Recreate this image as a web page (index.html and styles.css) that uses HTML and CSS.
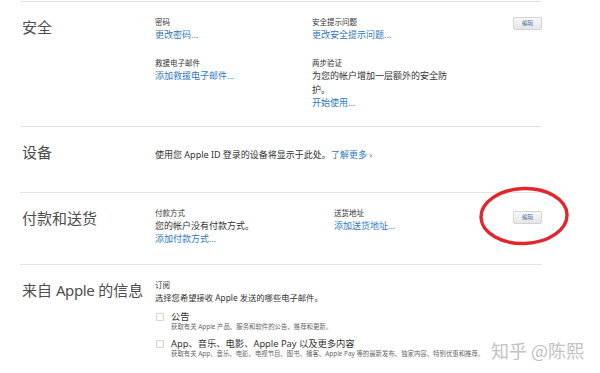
FILE: index.html
```html
<!DOCTYPE html>
<html lang="zh-CN">
<head>
    <meta charset="UTF-8">
    <title>Apple ID 帐户</title>
    <link rel="stylesheet" href="styles.css">
</head>
<body>
    <div class="page">
        <!-- 安全 -->
        <section class="section">
            <h2 class="section-title">安全</h2>
            <div class="fields fields-security">
                <div class="field">
                    <div class="label">密码</div>
                    <a class="link" href="#">更改密码...</a>
                </div>
                <div class="field">
                    <div class="label">安全提示问题</div>
                    <a class="link" href="#">更改安全提示问题...</a>
                </div>
                <button class="edit-button">编辑</button>
                <div class="field">
                    <div class="label">救援电子邮件</div>
                    <a class="link" href="#">添加救援电子邮件...</a>
                </div>
                <div class="field">
                    <div class="label">两步验证</div>
                    <div class="text">为您的帐户增加一层额外的安全防护。</div>
                    <a class="link" href="#">开始使用...</a>
                </div>
            </div>
        </section>

        <!-- 设备 -->
        <section class="section section-devices">
            <h2 class="section-title">设备</h2>
            <div class="text devices-text">
                使用您 Apple ID 登录的设备将显示于此处。<a class="link inline-link" href="#">了解更多 ›</a>
            </div>
        </section>

        <!-- 付款和送货 -->
        <section class="section section-payment">
            <h2 class="section-title">付款和送货</h2>
            <div class="fields fields-payment">
                <div class="field">
                    <div class="label">付款方式</div>
                    <div class="text">您的帐户没有付款方式。</div>
                    <a class="link" href="#">添加付款方式...</a>
                </div>
                <div class="field">
                    <div class="label">送货地址</div>
                    <a class="link" href="#">添加送货地址...</a>
                </div>
                <button class="edit-button edit-button-low">编辑</button>
            </div>
        </section>

        <!-- 来自 Apple 的信息 -->
        <section class="section section-messages">
            <h2 class="section-title">来自 <span class="latin">Apple</span> 的信息</h2>
            <div class="field">
                <div class="label">订阅</div>
                <div class="text messages-intro">选择您希望接收 Apple 发送的哪些电子邮件。</div>
                <label class="option">
                    <span class="checkbox"></span>
                    <span class="option-body">
                        <span class="option-title">公告</span>
                        <span class="option-desc">获取有关 Apple 产品、服务和软件的公告、推荐和更新。</span>
                    </span>
                </label>
                <label class="option">
                    <span class="checkbox"></span>
                    <span class="option-body">
                        <span class="option-title">App、音乐、电影、Apple Pay 以及更多内容</span>
                        <span class="option-desc">获取有关 App、音乐、电影、电视节目、图书、播客、Apple Pay 等的最新发布、独家内容、特别优惠和推荐。</span>
                    </span>
                </label>
            </div>
        </section>
    </div>

    <!-- 标注的红圈 -->
    <svg class="mark" width="96" height="66" viewBox="0 0 96 66">
        <ellipse cx="48" cy="33" rx="43" ry="27.5" fill="none" stroke="#e3262c" stroke-width="3.4" transform="rotate(-2 48 33)"/>
    </svg>

    <div class="watermark">知乎 @陈熙</div>
</body>
</html>
```

FILE: styles.css
```css
body {
    margin: 0;
    background-color: #fff;
    font-family: "Noto Sans", "Noto Sans CJK SC", sans-serif;
    color: #333;
    overflow: hidden;
}

.page {
    width: 522px;
    margin-left: 20px;
    padding-top: 1px;
}

.section {
    display: grid;
    grid-template-columns: 135px 1fr;
    border-top: 1px solid #e4e4e4;
    padding: 15px 0 16px 0;
}

.section-title {
    margin: 0;
    padding-left: 2px;
    font-family: "Noto Sans", "Noto Sans CJK SC", sans-serif;
    font-size: 15px;
    font-weight: normal;
    line-height: 20px;
    color: #4d4d4d;
}

.section-title .latin {
    letter-spacing: -0.4px;
}

.fields {
    display: grid;
    row-gap: 16.5px;
}

.fields-security {
    grid-template-columns: 157px 140px 1fr;
}

.fields-payment {
    grid-template-columns: 179px 150px 1fr;
}

.label {
    font-size: 7.5px;
    line-height: 11px;
    color: #333;
}

.text {
    font-size: 9px;
    line-height: 13.5px;
    color: #333;
}

.link {
    display: block;
    font-size: 9px;
    line-height: 13.5px;
    color: #2f78c0;
    text-decoration: none;
}

.inline-link {
    display: inline;
}

.edit-button {
    justify-self: end;
    align-self: start;
    width: 29px;
    height: 13px;
    padding: 0;
    font-family: inherit;
    font-size: 5.5px;
    line-height: 11px;
    color: #3f6fa6;
    background: linear-gradient(#f7f7f7, #e6e6e6);
    border: 1px solid #d4d4d4;
    border-radius: 2px;
    cursor: pointer;
}

.edit-button-low {
    margin-top: 3px;
}

/* 设备 */
.section-devices {
    padding-bottom: 30px;
}

.devices-text {
    margin-top: 6px;
}

/* 付款和送货 */
.section-payment {
    padding-bottom: 18px;
}

/* 来自 Apple 的信息 */
.section-messages {
    padding-bottom: 10px;
}

.messages-intro {
    font-size: 8.3px;
}

.option {
    display: flex;
    gap: 7px;
    margin-top: 7px;
}

.option + .option {
    margin-top: 6.5px;
}

.checkbox {
    width: 6px;
    height: 6px;
    margin-top: 2px;
    margin-left: 1px;
    border: 1px solid #d2d2d2;
    border-radius: 1px;
    background-color: #fff;
    flex-shrink: 0;
}

.option-body {
    display: flex;
    flex-direction: column;
}

.option-title {
    font-size: 9.3px;
    line-height: 12px;
    color: #333;
}

.option-desc {
    font-size: 6.4px;
    line-height: 8px;
    color: #666;
    white-space: nowrap;
}

/* 标注和水印 */
.mark {
    position: absolute;
    left: 476px;
    top: 183px;
}

.watermark {
    position: absolute;
    left: 491px;
    top: 338px;
    font-family: "Noto Sans CJK SC", sans-serif;
    font-size: 18px;
    line-height: 24px;
    color: #c2c2c2;
    text-shadow: 0 0 2px #fff;
}
```
